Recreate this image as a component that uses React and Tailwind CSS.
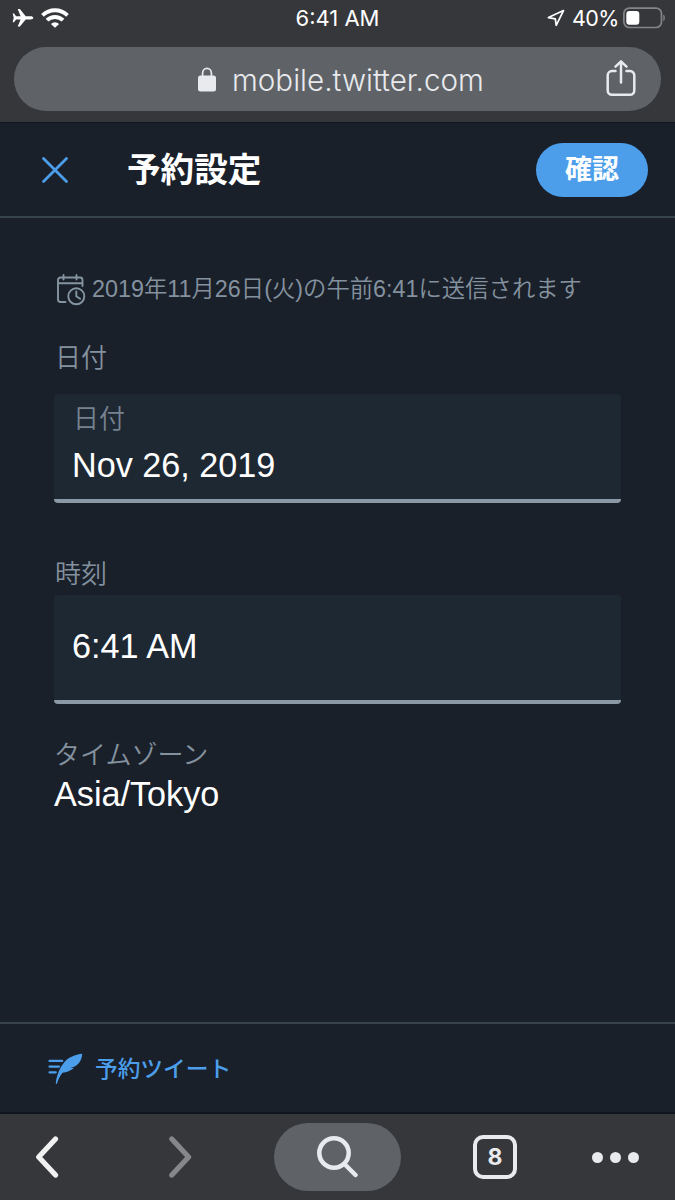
const SENDS_AT = '2019年11月26日(火)の午前6:41に送信されます';

const StatusBar = () => (
  <div className="grid h-[36px] grid-cols-3 items-center text-[22px] text-white font-['Inter','Liberation_Sans',sans-serif]">
    <div className="flex items-center pl-[12px] gap-[7px]">
      <svg width="22" height="20" viewBox="0 0 22 20" fill="#fff">
        <path d="M21.3 9.8c0-1-1.2-1.6-2.7-1.6h-4.9L7.9 1H5.7l2.9 7.2H4.1L2 5.4H.7l1 4.4-1 4.4H2l2.1-2.8h4.5l-2.9 7.2h2.2l5.8-7.2h4.9c1.500 0 2.700-.6 2.700-1.600z" />
      </svg>
      <svg width="28" height="20" viewBox="0 0 28 20" fill="none" stroke="#fff" strokeWidth="3.900">
        <path d="M1.500 7.300a18 18 0 0 1 25 0" />
        <path d="M6 12.200a11.500 11.500 0 0 1 16 0" />
        <path d="M9.900 15.900a6 6 0 0 1 8.200 0L14 19.800z" fill="#fff" stroke="none" />
      </svg>
    </div>
    <div className="text-center whitespace-nowrap">6:41 AM</div>
    <div className="flex items-center justify-end pr-[9px]">
      <svg className="mr-[7px]" width="18" height="18" viewBox="0 0 18 18" fill="none" stroke="#fff" strokeWidth="1.700" strokeLinejoin="round">
        <path d="M16.500 1.600 1.400 8.600l6.900 1.200.9 6.600z" />
      </svg>
      <span className="mr-[4px] text-[21.500px] tracking-[-0.500px]">40%</span>
      <svg width="43" height="22" viewBox="0 0 43 22" fill="none">
        <rect x="0.900" y="1.100" width="37.600" height="19.400" rx="5.500" stroke="#848588" strokeWidth="1.700" />
        <rect x="3.300" y="4" width="13" height="13.700" rx="3" fill="#fff" />
        <path d="M40.300 7.500c2 1 2 5.800 0 6.800z" fill="#848588" />
      </svg>
    </div>
  </div>
);

const AddressBar = () => (
  <div className="mx-[14px] mt-[11px] flex h-[64px] items-center rounded-full bg-[#5f6367] text-[#e8eaed]">
    <svg className="ml-[184px]" width="18" height="25" viewBox="0 0 18 25">
      <path d="M4.600 10V6.200a4.400 4.800 0 0 1 8.800 0V10" fill="none" stroke="#e8eaed" strokeWidth="1.700" />
      <rect y="8.500" width="18" height="16" rx="2.500" fill="#e8eaed" />
    </svg>
    <span className="ml-[16px] mt-[2px] w-[254px] text-[29.600px] font-[350] whitespace-nowrap font-['Inter','Liberation_Sans',sans-serif]">mobile.twitter.com</span>
    <svg className="ml-[120px] -mt-[2px]" width="30" height="38" viewBox="0 0 30 38" fill="none" stroke="#e8eaed" strokeWidth="2.500" strokeLinecap="round" strokeLinejoin="round">
      <path d="M9.500 12H6a4.300 4.300 0 0 0-4.300 4.300v15.200A4.300 4.300 0 0 0 6 35.800h18a4.300 4.300 0 0 0 4.300-4.300V16.300A4.300 4.300 0 0 0 24 12h-3.500" />
      <path d="M15 23.500V2.500M9.500 7.700 15 2.300l5.500 5.400" />
    </svg>
  </div>
);

const Header = () => (
  <header className="flex h-[96px] items-center border-t border-b-2 border-t-[#10141f] border-b-[#38444d] pl-[41px] pr-[27px]">
    <svg width="28" height="28" viewBox="0 0 28 28" stroke="#4c9eeb" strokeWidth="2.800" strokeLinecap="round">
      <path d="M2.500 2.500 25.500 25.500M25.500 2.500 2.500 25.500" />
    </svg>
    <h1 className="ml-[58px] mt-[3px] text-[33.600px] leading-[40px] font-bold text-white">予約設定</h1>
    <button className="ml-auto h-[54px] w-[112px] rounded-full bg-[#4c9eeb] text-[27px] leading-[54px] font-bold text-white">確認</button>
  </header>
);

const Field = ({ label, value }) => (
  <div className="flex h-[109px] flex-col justify-center rounded-[4px] border-b-4 border-[#8b98a5] bg-[#1e2833] px-[18px] pb-[4px]">
    {label && <span className="-mt-[4px] ml-[1px] text-[26px] leading-[44px] font-[350] text-[#76828f]">{label}</span>}
    <span className="text-[34.200px] leading-[48px] text-white">{value}</span>
  </div>
);

const Schedule = () => (
  <main className="flex h-[804px] flex-col px-[54px] pt-[52px] text-[#84919e]">
    <div className="flex h-[38px] items-center">
      <svg className="ml-[3px] mt-[2px] mr-[6px]" width="29" height="32" viewBox="0 0 29 32" fill="none" stroke="#8494a1" strokeWidth="1.900" strokeLinecap="round">
        <path d="M8.500 28H3.500A2.500 2.500 0 0 1 1 25.500V6a2.500 2.500 0 0 1 2.500-2.500h19.500A2.500 2.500 0 0 1 25.500 6v6M1 9.200h24.500M6.500 1v4.500M19.500 1v4.500" />
        <circle cx="19.300" cy="22.300" r="8" />
        <path d="M19.300 17.500v4.800l3.800 2.400" />
      </svg>
      <span className="mt-[2px] text-[23.350px] whitespace-nowrap font-[350]">{SENDS_AT}</span>
    </div>
    <div className="mt-[30px] ml-[1px] text-[26px] leading-[40px] font-[350]">日付</div>
    <div className="mt-[16px]">
      <Field label="日付" value="Nov 26, 2019" />
    </div>
    <div className="mt-[51px] mb-[1px] ml-[1px] text-[26px] leading-[40px] font-[350]">時刻</div>
    <div>
      <Field value="6:41 AM" />
    </div>
    <div className="mt-[31px] text-[26px] leading-[40px] font-[350]">タイムゾーン</div>
    <div className="-mt-[1px] text-[34.200px] leading-[40px] text-white">Asia/Tokyo</div>
  </main>
);

const ScheduledLink = () => (
  <div className="flex h-[92px] items-center border-t-2 border-b-2 border-t-[#38424d] border-b-[#10141f] pl-[48px]">
    <svg width="36" height="34" viewBox="0 0 36 34" fill="#4c9eeb">
      <path d="M34.200 2.800C27 3.500 20.500 6.500 16.500 11 11.800 16.500 8.600 24.500 7.800 32.200c0 1 1 1 1.300.1 1.300-4.200 3.100-7.600 5.400-10.600 4.200-.4 8.300-2 11.500-4.700l-3.600-.1C27 16 30.300 13.700 32.300 10c1.200-2.200 1.800-4.600 1.900-7.200z" />
      <path d="M1.500 9.900h12.700M1.500 15.600h9.500M1.500 21.300h6.300" stroke="#4c9eeb" strokeWidth="2.200" strokeLinecap="round" />
    </svg>
    <span className="ml-[11px] mt-[2px] text-[22.700px] leading-[32px] font-medium text-[#4c9eeb]">予約ツイート</span>
  </div>
);

const Toolbar = () => (
  <nav className="flex h-[86px] items-center bg-[#36373b]">
    <svg className="ml-[35px]" width="24" height="42" viewBox="0 0 24 42" fill="none" stroke="#f1f1f2" strokeWidth="5.200" strokeLinecap="round" strokeLinejoin="round">
      <path d="M20.500 2.900 3.700 21l16.800 18.100" />
    </svg>
    <svg className="ml-[109px]" width="24" height="42" viewBox="0 0 24 42" fill="none" stroke="#86878a" strokeWidth="5.200" strokeLinecap="round" strokeLinejoin="round">
      <path d="M3.800 2.900 20.600 21 3.800 39.100" />
    </svg>
    <div className="ml-[82px] flex h-[68px] w-[127px] items-center justify-center rounded-full bg-[#5f6367]">
      <svg className="-mr-[1px]" width="42" height="42" viewBox="0 0 42 42" fill="none" stroke="#e8eaed" strokeWidth="4.500" strokeLinecap="round">
        <circle cx="17" cy="17" r="14.700" />
        <path d="M28 28.500 38.500 39" />
      </svg>
    </div>
    <div className="ml-[72px] flex h-[44px] w-[44px] items-center justify-center rounded-[10px] border-[4.500px] border-[#e8eaed] text-[23px] font-bold text-[#e8eaed] font-['Inter','Liberation_Sans',sans-serif]">8</div>
    <div className="ml-[75px] flex gap-[7px]">
      <span className="size-[11px] rounded-full bg-[#e8eaed]" />
      <span className="size-[11px] rounded-full bg-[#e8eaed]" />
      <span className="size-[11px] rounded-full bg-[#e8eaed]" />
    </div>
  </nav>
);

export default function App() {
  return (
    <div lang="ja" className="flex h-[1200px] w-[675px] flex-col overflow-hidden bg-[#19202a] font-['Liberation_Sans','Noto_Sans_CJK_JP',sans-serif]">
      <div className="h-[122px] bg-[#36373b]">
        <StatusBar />
        <AddressBar />
      </div>
      <Header />
      <Schedule />
      <ScheduledLink />
      <Toolbar />
    </div>
  );
}
